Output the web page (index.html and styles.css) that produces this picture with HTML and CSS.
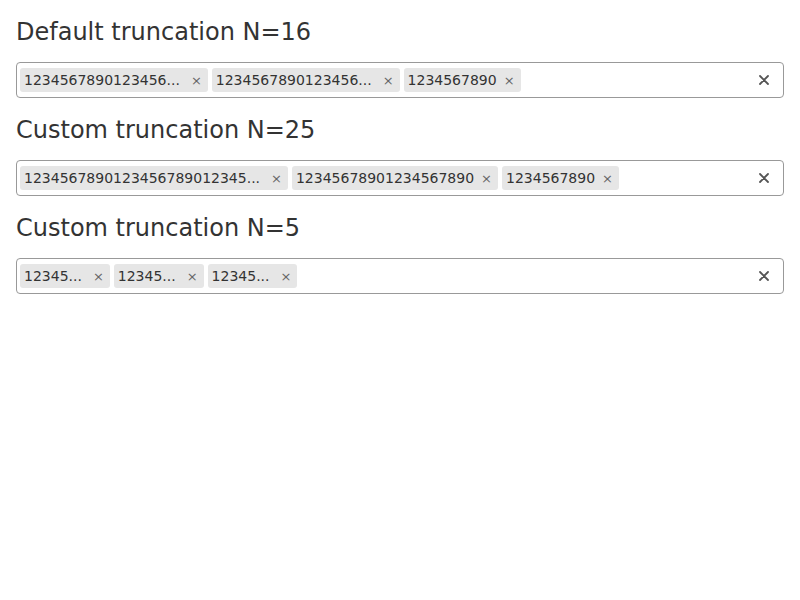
FILE: index.html
```html
<!DOCTYPE html>
<html>
<head>
<meta charset="utf-8">
<link rel="stylesheet" href="styles.css">
</head>
<body>
<div class="page">
  <section class="demo">
    <h2 class="title">Default truncation N=16</h2>
    <div class="select">
      <div class="chips">
        <span class="chip"><span class="chip-label truncated">1234567890123456...</span><span class="chip-x">×</span></span>
        <span class="chip"><span class="chip-label truncated">1234567890123456...</span><span class="chip-x">×</span></span>
        <span class="chip"><span class="chip-label">1234567890</span><span class="chip-x">×</span></span>
      </div>
      <span class="clear"><svg width="10" height="10" viewBox="0 0 10 10"><path d="M1 1L9 9M9 1L1 9" stroke="#555" stroke-width="1.8" stroke-linecap="round"/></svg></span>
    </div>
  </section>
  <section class="demo">
    <h2 class="title">Custom truncation N=25</h2>
    <div class="select">
      <div class="chips">
        <span class="chip"><span class="chip-label truncated">1234567890123456789012345...</span><span class="chip-x">×</span></span>
        <span class="chip"><span class="chip-label">12345678901234567890</span><span class="chip-x">×</span></span>
        <span class="chip"><span class="chip-label">1234567890</span><span class="chip-x">×</span></span>
      </div>
      <span class="clear"><svg width="10" height="10" viewBox="0 0 10 10"><path d="M1 1L9 9M9 1L1 9" stroke="#555" stroke-width="1.8" stroke-linecap="round"/></svg></span>
    </div>
  </section>
  <section class="demo">
    <h2 class="title">Custom truncation N=5</h2>
    <div class="select">
      <div class="chips">
        <span class="chip"><span class="chip-label truncated">12345...</span><span class="chip-x">×</span></span>
        <span class="chip"><span class="chip-label truncated">12345...</span><span class="chip-x">×</span></span>
        <span class="chip"><span class="chip-label truncated">12345...</span><span class="chip-x">×</span></span>
      </div>
      <span class="clear"><svg width="10" height="10" viewBox="0 0 10 10"><path d="M1 1L9 9M9 1L1 9" stroke="#555" stroke-width="1.8" stroke-linecap="round"/></svg></span>
    </div>
  </section>
</div>
</body>
</html>
```
FILE: styles.css
```css
html, body {
  margin: 0;
  padding: 0;
  background: #fff;
}
body {
  font-family: "DejaVu Sans", sans-serif;
  color: #333;
}
.page {
  padding: 18px 16px 16px;
  display: flex;
  flex-direction: column;
  gap: 18px;
}
.demo {
  display: flex;
  flex-direction: column;
  gap: 16px;
}
.title {
  margin: 0;
  font-size: 24px;
  font-weight: normal;
  line-height: 28px;
  color: #333;
}
.select {
  box-sizing: border-box;
  height: 36px;
  border: 1px solid #999;
  border-radius: 4px;
  display: flex;
  align-items: center;
  padding: 0 3px;
}
.chips {
  flex: 1;
  display: flex;
  gap: 4px;
}
.chip {
  display: flex;
  align-items: center;
  height: 24px;
  background: #e6e6e6;
  border-radius: 3px;
  padding: 0 6px 0 4px;
  font-size: 14px;
  color: #333;
}
.chip-label.truncated {
  margin-right: 4px;
}
.chip-x {
  margin-left: 7px;
  font-size: 13px;
  color: #666;
}
.clear {
  width: 34px;
  height: 10px;
  display: flex;
  justify-content: center;
  align-items: center;
  margin-right: -1px;
}
.clear svg {
  display: block;
}
```
